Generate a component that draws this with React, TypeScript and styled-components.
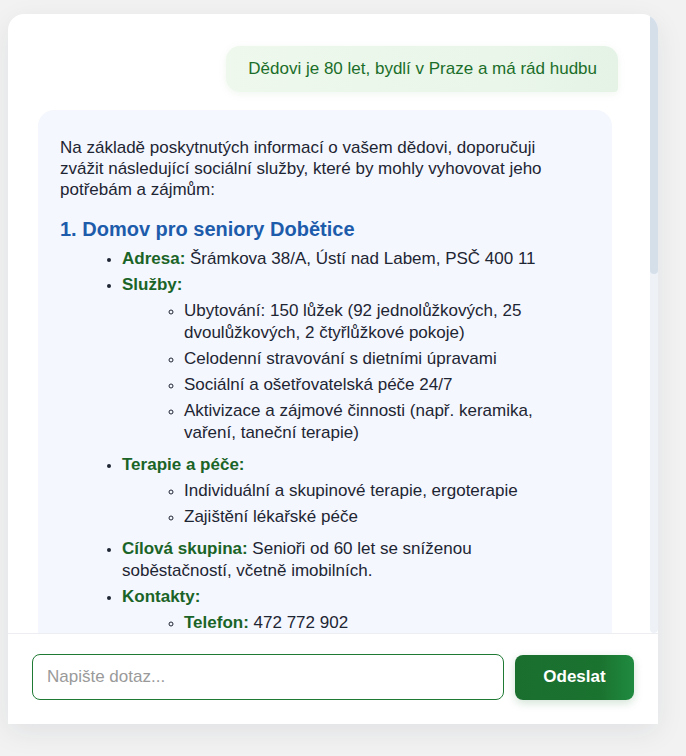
import React from 'react';
import styled, { createGlobalStyle } from 'styled-components';

const GlobalStyle = createGlobalStyle`
    html, body {
        margin: 0;
        padding: 0;
        background: #f2f2f2;
        font-family: "Liberation Sans", Arial, sans-serif;
    }
`

const Page = styled.div`
    padding: 14px 28px 0 8px;
    height: 756px;
    box-sizing: border-box;
`

const Card = styled.div`
    width: 650px;
    background: #ffffff;
    border-radius: 16px 16px 0 0;
    box-shadow: 0 8px 28px rgba(30, 40, 60, 0.08);
    display: flex;
    flex-direction: column;
    overflow: hidden;
`

const Body = styled.div`
    height: 619px;
    display: flex;
`

const Messages = styled.div`
    flex: 1;
    overflow: hidden;
    padding: 32px 32px 0 30px;
    display: flex;
    flex-direction: column;
    gap: 18px;
`

const ScrollTrack = styled.div`
    width: 8px;
    background: #eef2f7;
    border-radius: 4px;
    display: flex;
    flex-direction: column;
`

const ScrollThumb = styled.div`
    height: 260px;
    background: #d5dfea;
    border-radius: 4px;
`

const UserBubble = styled.div`
    align-self: flex-end;
    background: linear-gradient(90deg, #eef8ec 0%, #eaf6ea 70%, #e4f3e6 100%);
    color: #1b6e2a;
    font-size: 17px;
    line-height: 20px;
    padding: 13px 21px 13px 22px;
    border-radius: 14px 14px 4px 14px;
    box-shadow: 0 2px 8px rgba(60, 140, 70, 0.08);
    flex-shrink: 0;
`

const BotBubble = styled.div`
    width: 574px;
    box-sizing: border-box;
    background: #f4f7fe;
    color: #1e2533;
    font-size: 17px;
    line-height: 21px;
    padding: 27px 62px 24px 22px;
    border-radius: 16px;
    flex-shrink: 0;
`

const Intro = styled.p`
    margin: 0 0 16px;
`

const Heading = styled.h3`
    margin: 0 0 6px;
    font-size: 20px;
    line-height: 26px;
    color: #1d5bab;
    font-weight: bold;
`

const List = styled.ul<{ $nested?: boolean }>`
    margin: ${p => (p.$nested ? '4px 0 10px' : '0 0 16px')};
    padding-left: 62px;
    list-style: ${p => (p.$nested ? 'circle' : 'disc')};
`

const Item = styled.li`
    margin-bottom: 4px;
    line-height: 22px;
    &::marker {
        font-size: 14px;
    }
`

const Label = styled.strong`
    color: #1b6427;
`

const Footer = styled.div`
    border-top: 1px solid #eceef1;
    padding: 20px 24px 24px 24px;
    display: flex;
    gap: 11px;
    align-items: center;
`

const Input = styled.input`
    flex: 1;
    height: 46px;
    box-sizing: border-box;
    border: 1px solid #1f7a34;
    border-radius: 8px;
    padding: 0 14px;
    font-size: 17px;
    font-family: "Liberation Sans", Arial, sans-serif;
    color: #222;
    outline: none;
    caret-color: #4a8df0;
    &::placeholder {
        color: #9a9a9a;
    }
`

const SendButton = styled.button`
    width: 119px;
    height: 45px;
    border: none;
    border-radius: 8px;
    background: linear-gradient(90deg, #1a6f2f 0%, #1b7330 72%, #1f8b40 100%);
    color: #ffffff;
    font-size: 17px;
    font-weight: bold;
    font-family: "Liberation Sans", Arial, sans-serif;
    box-shadow: 0 3px 10px rgba(27, 110, 45, 0.2);
    cursor: pointer;
`

type Entry = { label?: string; text?: string; sub?: Entry[] }

const homes: { title: string; entries: Entry[] }[] = [
    {
        title: '1. Domov pro seniory Dobětice',
        entries: [
            { label: 'Adresa:', text: 'Šrámkova 38/A, Ústí nad Labem, PSČ 400 11' },
            {
                label: 'Služby:',
                sub: [
                    { text: 'Ubytování: 150 lůžek (92 jednolůžkových, 25 dvoulůžkových, 2 čtyřlůžkové pokoje)' },
                    { text: 'Celodenní stravování s dietními úpravami' },
                    { text: 'Sociální a ošetřovatelská péče 24/7' },
                    { text: 'Aktivizace a zájmové činnosti (např. keramika, vaření, taneční terapie)' },
                ],
            },
            {
                label: 'Terapie a péče:',
                sub: [
                    { text: 'Individuální a skupinové terapie, ergoterapie' },
                    { text: 'Zajištění lékařské péče' },
                ],
            },
            { label: 'Cílová skupina:', text: 'Senioři od 60 let se sníženou soběstačností, včetně imobilních.' },
            {
                label: 'Kontakty:',
                sub: [
                    { label: 'Telefon:', text: '472 772 902' },
                    { label: 'E-mail:', text: 'info@dsdobetice.cz' },
                ],
            },
        ],
    },
]

function renderEntry(entry: Entry, key: number) {
    return (
        <Item key={key}>
            {entry.label && <Label>{entry.label}</Label>}
            {entry.text && (entry.label ? ' ' + entry.text : entry.text)}
            {entry.sub && (
                <List $nested>
                    {entry.sub.map((s, i) => renderEntry(s, i))}
                </List>
            )}
        </Item>
    )
}

export default function App() {
    return (
        <>
            <GlobalStyle />
            <Page>
                <Card>
                    <Body>
                        <Messages>
                            <UserBubble>Dědovi je 80 let, bydlí v Praze a má rád hudbu</UserBubble>
                            <BotBubble>
                                <Intro>
                                    Na základě poskytnutých informací o vašem dědovi, doporučuji zvážit následující
                                    sociální služby, které by mohly vyhovovat jeho potřebám a zájmům:
                                </Intro>
                                {homes.map((home, i) => (
                                    <React.Fragment key={i}>
                                        <Heading>{home.title}</Heading>
                                        <List>{home.entries.map((e, j) => renderEntry(e, j))}</List>
                                    </React.Fragment>
                                ))}
                            </BotBubble>
                        </Messages>
                        <ScrollTrack>
                            <ScrollThumb />
                        </ScrollTrack>
                    </Body>
                    <Footer>
                        <Input placeholder="Napište dotaz..." autoFocus />
                        <SendButton>Odeslat</SendButton>
                    </Footer>
                </Card>
            </Page>
        </>
    )
}
